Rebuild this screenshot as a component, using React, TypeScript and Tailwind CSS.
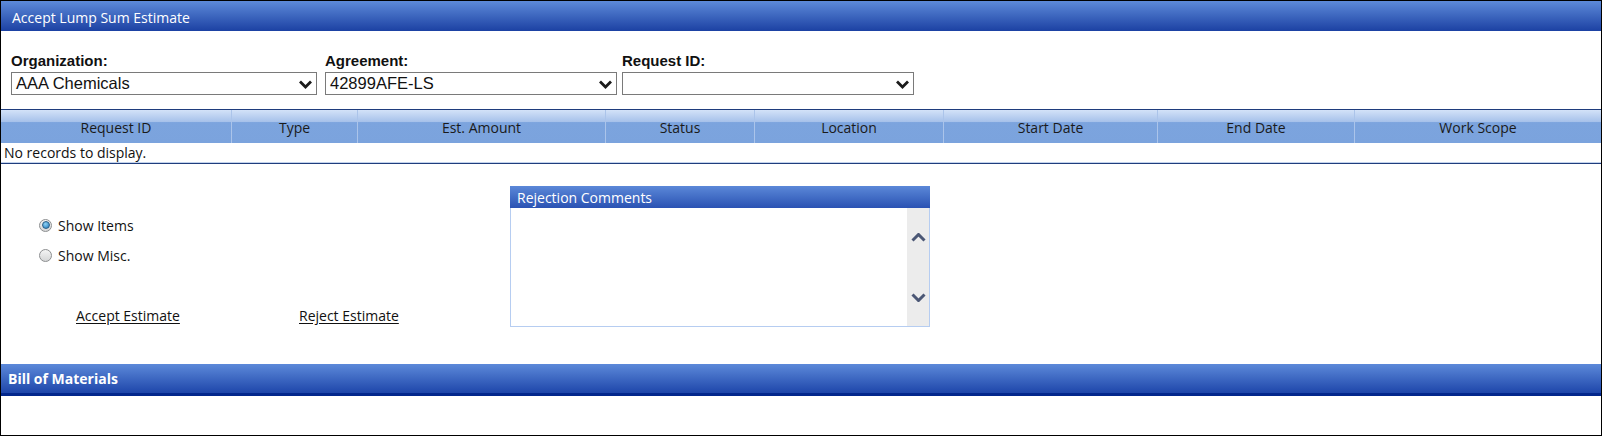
import React from 'react';

const columns = [
  { label: 'Request ID', width: 'w-[230px]' },
  { label: 'Type', width: 'w-[126px]' },
  { label: 'Est. Amount', width: 'w-[248px]' },
  { label: 'Status', width: 'w-[149px]' },
  { label: 'Location', width: 'w-[189px]' },
  { label: 'Start Date', width: 'w-[214px]' },
  { label: 'End Date', width: 'w-[197px]' },
  { label: 'Work Scope', width: 'flex-1' },
];

function SelectChevron() {
  return (
    <svg width="15" height="10" viewBox="0 0 15 10" className="shrink-0">
      <polyline points="2,2.5 7.5,8 13,2.5" fill="none" stroke="#1b1b1b" strokeWidth="2.8" />
    </svg>
  );
}

function Field({ label, value, width, gap }: { label: string; value: string; width: string; gap: string }) {
  return (
    <div className={`${width} ${gap} shrink-0 flex flex-col`}>
      <div className="h-[16px] leading-[16px] text-[15px] font-bold text-[#111] font-['Liberation_Sans',Arial,sans-serif]">
        {label}
      </div>
      <div className="mt-[3px] h-[23px] border border-[#7a7a7a] bg-white flex items-center justify-between pl-[4px] pr-[3px]">
        <span className="text-[16.5px] leading-none text-[#111] font-['Liberation_Sans',Arial,sans-serif]">{value}</span>
        <SelectChevron />
      </div>
    </div>
  );
}

function Radio({ checked, label }: { checked?: boolean; label: string }) {
  return (
    <div className="h-[30px] flex items-center pl-[38px]">
      <div className="w-[13px] h-[13px] rounded-full border border-[#8c8e90] bg-[linear-gradient(to_bottom,#f4f4f4,#d5d6d7)] flex items-center justify-center">
        {checked && (
          <div className="w-[8px] h-[8px] rounded-full border border-[#2b5f86] bg-[radial-gradient(circle_at_40%_35%,#8fd3f5,#1b74b8)]" />
        )}
      </div>
      <span className="ml-[6px] text-[14px] text-[#111]">{label}</span>
    </div>
  );
}

function ScrollChevron({ up }: { up?: boolean }) {
  return (
    <svg width="15" height="9" viewBox="0 0 15 9">
      <polyline
        points={up ? '1.5,7.5 7.5,1.5 13.5,7.5' : '1.5,1.5 7.5,7.5 13.5,1.5'}
        fill="none"
        stroke="#4b5775"
        strokeWidth="3"
      />
    </svg>
  );
}

export default function App() {
  return (
    <div className="w-[1602px] h-[436px] border border-black bg-white flex flex-col overflow-hidden font-['Open_Sans',sans-serif]">
      {/* title bar */}
      <div className="h-[30px] shrink-0 flex items-center pl-[11px] pt-[2px] text-[14px] text-white bg-[linear-gradient(to_bottom,#5d8ad9,#1c41a3)]">
        Accept Lump Sum Estimate
      </div>

      {/* filters */}
      <div className="h-[78px] shrink-0 flex pt-[22px] pl-[10px]">
        <Field label="Organization:" value="AAA Chemicals" width="w-[306px]" gap="mr-[8px]" />
        <Field label="Agreement:" value="42899AFE-LS" width="w-[292px]" gap="mr-[5px]" />
        <Field label="Request ID:" value="" width="w-[292px]" gap="" />
      </div>

      {/* grid */}
      <div className="shrink-0 border-t border-[#1f3d7d]">
        <div className="h-[33px] flex bg-[linear-gradient(to_bottom,#d3e2f8_0%,#a6c1ea_36%,#7ca4de_38%,#7ba3dd_100%)]">
          {columns.map((col, i) => (
            <div
              key={col.label}
              className={`${col.width} shrink-0 flex items-center justify-center pt-[1px] text-[14px] text-[#1a1a1a] ${i > 0 ? 'border-l border-[#abc4ea]' : ''}`}
            >
              {col.label}
            </div>
          ))}
        </div>
        <div className="h-[20px] flex items-end pl-[3px] text-[14px] leading-[19px] text-[#111] border-b border-[#c3d3ec]">
          No records to display.
        </div>
        <div className="h-[1px] bg-[#1f3d7d]" />
      </div>

      {/* actions + comments */}
      <div className="h-[200px] shrink-0 flex pt-[22px]">
        <div className="w-[509px] shrink-0 pt-[24px]">
          <Radio checked label="Show Items" />
          <Radio label="Show Misc." />
          <div className="mt-[35px] h-[20px] flex items-center pl-[75px] text-[14px] text-[#111]">
            <div className="w-[223px] shrink-0">
              <a href="#" className="underline underline-offset-2">Accept Estimate</a>
            </div>
            <a href="#" className="underline underline-offset-2">Reject Estimate</a>
          </div>
        </div>

        <div className="w-[420px] shrink-0 flex flex-col">
          <div className="h-[22px] flex items-center pl-[7px] text-[14px] text-white bg-[linear-gradient(to_bottom,#5b88d8,#2a52b3)]">
            Rejection Comments
          </div>
          <div className="h-[119px] flex border border-t-0 border-[#b6cdf1] bg-white">
            <div className="flex-1" />
            <div className="w-[22px] bg-[#ececec] flex flex-col items-center pt-[25px]">
              <ScrollChevron up />
              <div className="mt-[51px]">
                <ScrollChevron />
              </div>
            </div>
          </div>
        </div>
      </div>

      {/* bill of materials */}
      <div className="h-[32px] shrink-0 flex items-center pl-[7px] text-[14px] font-bold text-white border-b-[3px] border-[#03278c] bg-[linear-gradient(to_bottom,#5c89d9,#1e46aa)]">
        Bill of Materials
      </div>
      <div className="flex-1" />
    </div>
  );
}
